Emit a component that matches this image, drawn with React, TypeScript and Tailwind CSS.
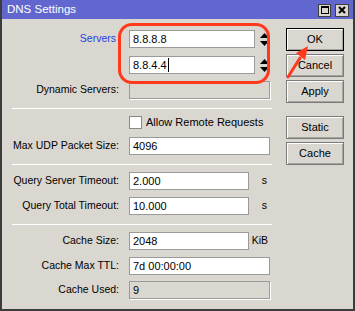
import React from "react";

const font = { fontFamily: '"Liberation Sans", Arial, sans-serif' };

const Spinner = () => (
  <svg width="9" height="13" viewBox="0 0 9 13" className="ml-[5px]">
    <polygon points="4.5,0 9,5 0,5" fill="#000" />
    <polygon points="0,8 9,8 4.5,13" fill="#000" />
  </svg>
);

const Label = ({ text, blue }: { text: string; blue?: boolean }) => (
  <div
    className={`w-[118px] shrink-0 text-right ${blue ? "text-[#1f3fe0] pr-[4px]" : "text-black pr-[1px]"}`}
  >
    {text}
  </div>
);

const Field = ({
  value,
  w = "w-[143px]",
  disabled,
  cursor,
}: {
  value: string;
  w?: string;
  disabled?: boolean;
  cursor?: boolean;
}) => (
  <div
    className={`ml-[9px] h-[18px] ${w} border border-[#9a9a9a] flex items-center pl-[3px] text-[11px] ${
      disabled ? "bg-[#dad7d0] shadow-[1px_1px_0_#ffffff]" : "bg-white"
    }`}
  >
    <span>{value}</span>
    {cursor && <span className="w-[1px] h-[14px] bg-black ml-[1px]" />}
  </div>
);

const Sep = () => <div className="ml-[10px] h-[1px] bg-[#c4c1ba] border-b border-white w-[260px]" />;

const Btn = ({ text, def }: { text: string; def?: boolean }) => (
  <div
    className={`h-[23px] w-[58px] flex items-center justify-center text-black bg-[#dad7d0] border ${
      def ? "border-black" : "border-[#7a7a7a]"
    } shadow-[inset_1px_1px_0_#ffffff,inset_-1px_-1px_0_#a8a5a0]`}
  >
    {text}
  </div>
);

const Row = ({ children, mt }: { children: React.ReactNode; mt: string }) => (
  <div className={`flex items-center h-[18px] ${mt}`}>{children}</div>
);

export default function App() {
  return (
    <div className="w-[355px] h-[311px] relative text-[10.5px] select-none" style={font}>
      <div className="w-full h-full flex flex-col border-l-2 border-r-2 border-b-2 border-[#3c3c3c] bg-[#dad7d0]">
        {/* title bar */}
        <div className="h-[19px] bg-[#6267d0] flex items-center justify-between shrink-0 pl-[5px] pr-[4px]">
          <span className="text-white text-[11.5px] leading-none mt-[1px]">DNS Settings</span>
          <div className="flex gap-[4px] mt-[1px]">
            <div className="w-[13px] h-[13px] bg-[#dad7d0] border border-[#404040] flex items-center justify-center">
              <div className="w-[8px] h-[8px] border border-black border-t-2" />
            </div>
            <div className="w-[14px] h-[13px] bg-[#dad7d0] border border-[#404040] flex items-center justify-center">
              <svg width="8" height="8" viewBox="0 0 8 8">
                <path d="M1 1 L7 7 M7 1 L1 7" stroke="#000" strokeWidth="2" />
              </svg>
            </div>
          </div>
        </div>

        {/* body */}
        <div className="flex">
          <div className="flex flex-col w-[268px] pt-[11px]">
            <Row mt="mt-0">
              <Label text="Servers" blue />
              <Field value="8.8.8.8" w="w-[126px]" />
              <Spinner />
            </Row>
            <Row mt="mt-[8px]">
              <Label text="" />
              <Field value="8.8.4.4" w="w-[126px]" cursor />
              <Spinner />
            </Row>
            <Row mt="mt-[7px]">
              <Label text="Dynamic Servers:" />
              <Field value="" disabled />
            </Row>
            <div className="mt-[9px]">
              <Sep />
            </div>
            <div className="flex items-center h-[13px] mt-[7px]">
              <div className="w-[118px] shrink-0" />
              <div className="ml-[9px] w-[13px] h-[13px] bg-white border border-[#8a8a8a]" />
              <span className="ml-[4px] text-[11px]">Allow Remote Requests</span>
            </div>
            <Row mt="mt-[8px]">
              <Label text="Max UDP Packet Size:" />
              <Field value="4096" />
            </Row>
            <div className="mt-[9px]">
              <Sep />
            </div>
            <Row mt="mt-[7px]">
              <Label text="Query Server Timeout:" />
              <Field value="2.000" w="w-[122px]" />
              <span className="w-[21px] text-right pr-[3px]">s</span>
            </Row>
            <Row mt="mt-[7px]">
              <Label text="Query Total Timeout:" />
              <Field value="10.000" w="w-[122px]" />
              <span className="w-[21px] text-right pr-[3px]">s</span>
            </Row>
            <div className="mt-[9px]">
              <Sep />
            </div>
            <Row mt="mt-[7px]">
              <Label text="Cache Size:" />
              <Field value="2048" w="w-[122px]" />
              <span className="w-[21px] text-right pr-[2px]">KiB</span>
            </Row>
            <Row mt="mt-[7px]">
              <Label text="Cache Max TTL:" />
              <Field value="7d 00:00:00" />
            </Row>
            <Row mt="mt-[6px]">
              <Label text="Cache Used:" />
              <Field value="9" disabled />
            </Row>
          </div>

          <div className="flex flex-col ml-[16px] pt-[9px] gap-[3px] text-[11px]">
            <Btn text="OK" def />
            <Btn text="Cancel" />
            <Btn text="Apply" />
            <div className="h-[7px]" />
            <Btn text="Static" />
            <Btn text="Cache" />
          </div>
        </div>
      </div>

      {/* annotation: red highlight and arrow */}
      <div className="absolute left-[118px] top-[23px] w-[152px] h-[61px] border-[3px] border-[#ff3a1c] rounded-[14px] pointer-events-none" />
      <svg className="absolute left-0 top-0 pointer-events-none" width="355" height="311">
        <line x1="288" y1="77" x2="300" y2="58" stroke="#ff3a1c" strokeWidth="3" strokeLinecap="round" />
        <polygon points="308,46 296,53 305,60" fill="#ff3a1c" />
      </svg>
    </div>
  );
}
